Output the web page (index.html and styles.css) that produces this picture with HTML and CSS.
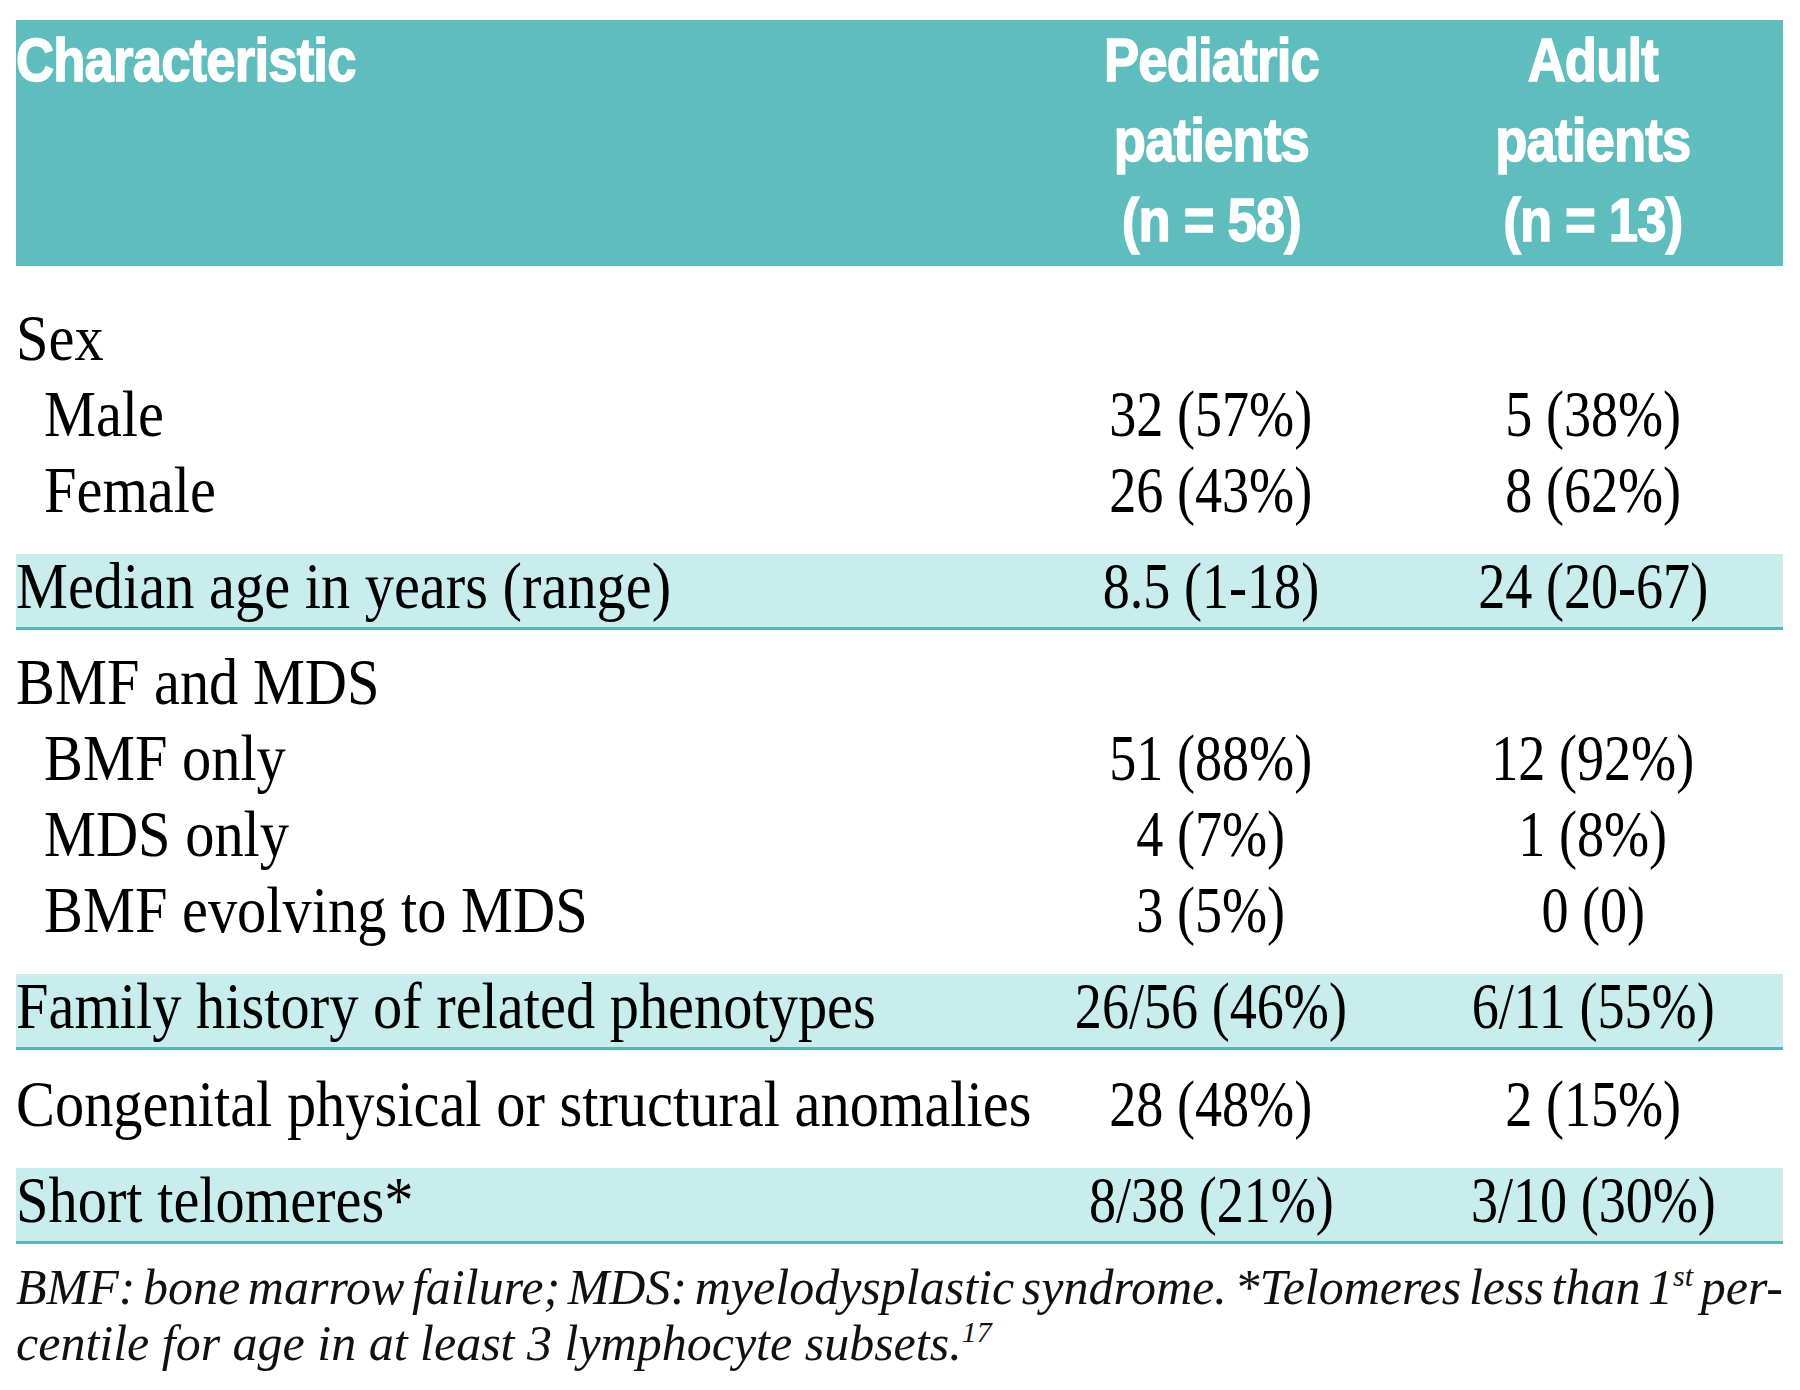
FILE: index.html
```html
<!DOCTYPE html>
<html>
<head>
<meta charset="utf-8">
<title>Patient characteristics</title>
<link rel="stylesheet" href="styles.css">
</head>
<body>
<div class="page">
  <div class="grid head">
    <div class="cell"><span class="hx">Characteristic</span></div>
    <div class="cell c"><span class="hx">Pediatric<br>patients<br>(n = 58)</span></div>
    <div class="cell c"><span class="hx">Adult<br>patients<br>(n = 13)</span></div>
  </div>

  <div class="grid sec sec-first">
    <div class="cell"><span class="lb">Sex</span></div><div class="cell c"></div><div class="cell c"></div>
    <div class="cell ind"><span class="lb">Male</span></div><div class="cell c"><span class="vl">32 (57%)</span></div><div class="cell c"><span class="vl">5 (38%)</span></div>
    <div class="cell ind"><span class="lb">Female</span></div><div class="cell c"><span class="vl">26 (43%)</span></div><div class="cell c"><span class="vl">8 (62%)</span></div>
  </div>

  <div class="grid band">
    <div class="cell"><span class="lb">Median age in years (range)</span></div><div class="cell c"><span class="vl">8.5 (1-18)</span></div><div class="cell c"><span class="vl">24 (20-67)</span></div>
  </div>

  <div class="grid sec">
    <div class="cell"><span class="lb">BMF and MDS</span></div><div class="cell c"></div><div class="cell c"></div>
    <div class="cell ind"><span class="lb">BMF only</span></div><div class="cell c"><span class="vl">51 (88%)</span></div><div class="cell c"><span class="vl">12 (92%)</span></div>
    <div class="cell ind"><span class="lb">MDS only</span></div><div class="cell c"><span class="vl">4 (7%)</span></div><div class="cell c"><span class="vl">1 (8%)</span></div>
    <div class="cell ind"><span class="lb">BMF evolving to MDS</span></div><div class="cell c"><span class="vl">3 (5%)</span></div><div class="cell c"><span class="vl">0 (0)</span></div>
  </div>

  <div class="grid band">
    <div class="cell"><span class="lb">Family history of related phenotypes</span></div><div class="cell c"><span class="vl">26/56 (46%)</span></div><div class="cell c"><span class="vl">6/11 (55%)</span></div>
  </div>

  <div class="grid sec sec-single">
    <div class="cell"><span class="lb">Congenital physical or structural anomalies</span></div><div class="cell c"><span class="vl">28 (48%)</span></div><div class="cell c"><span class="vl">2 (15%)</span></div>
  </div>

  <div class="grid band">
    <div class="cell"><span class="lb">Short telomeres*</span></div><div class="cell c"><span class="vl">8/38 (21%)</span></div><div class="cell c"><span class="vl">3/10 (30%)</span></div>
  </div>

  <div class="note">
    <div class="note-line first">BMF: bone marrow failure; MDS: myelodysplastic syndrome. *Telomeres less than 1<sup>st</sup> per-</div>
    <div class="note-line">centile for age in at least 3 lymphocyte subsets.<sup>17</sup></div>
  </div>
</div>
</body>
</html>
```

FILE: styles.css
```css
html, body {
  margin: 0;
  padding: 0;
  background: #ffffff;
}

.page {
  width: 1767px;
  padding: 20px 0 0 16px;
  font-family: "Liberation Serif", "Times New Roman", serif;
  color: #000;
}

.grid {
  display: grid;
  grid-template-columns: 1003px 384px 380px;
  font-size: 66px;
}

.cell {
  white-space: nowrap;
}

.c {
  text-align: center;
}

.ind {
  padding-left: 28px;
}

/* header */
.head {
  background: #5fbdbe;
  color: #ffffff;
  font-family: "Liberation Sans", Arial, sans-serif;
  font-weight: bold;
  font-size: 62px;
  line-height: 80px;
  padding-bottom: 6px;
}

.hx {
  display: inline-block;
  transform: scaleX(0.85);
  transform-origin: left center;
  -webkit-text-stroke: 1.5px #ffffff;
  letter-spacing: -1px;
}

.head .c .hx {
  transform-origin: center center;
}

/* body text */
.lb,
.vl {
  display: inline-block;
}

.lb {
  transform: scaleX(0.885);
  transform-origin: left center;
}

.vl {
  transform: scaleX(0.82);
  transform-origin: center center;
}

.sec {
  line-height: 76px;
  padding: 14px 0 26px;
}

.sec-first {
  padding-top: 34px;
}

.sec-single {
  padding-top: 16px;
}

.band {
  background: #c9ecec;
  border-bottom: 3px solid #5cb5b5;
  line-height: 64px;
  padding-bottom: 9px;
}

/* footnote */
.note {
  margin-top: 15px;
  font-style: italic;
  font-size: 50px;
  line-height: 56px;
  color: #111;
}

.note-line {
  white-space: nowrap;
}

.note-line.first {
  text-align: justify;
  text-align-last: justify;
  word-spacing: -7px;
}

.note sup {
  font-size: 0.6em;
  line-height: 0;
  vertical-align: 0.6em;
}
```
